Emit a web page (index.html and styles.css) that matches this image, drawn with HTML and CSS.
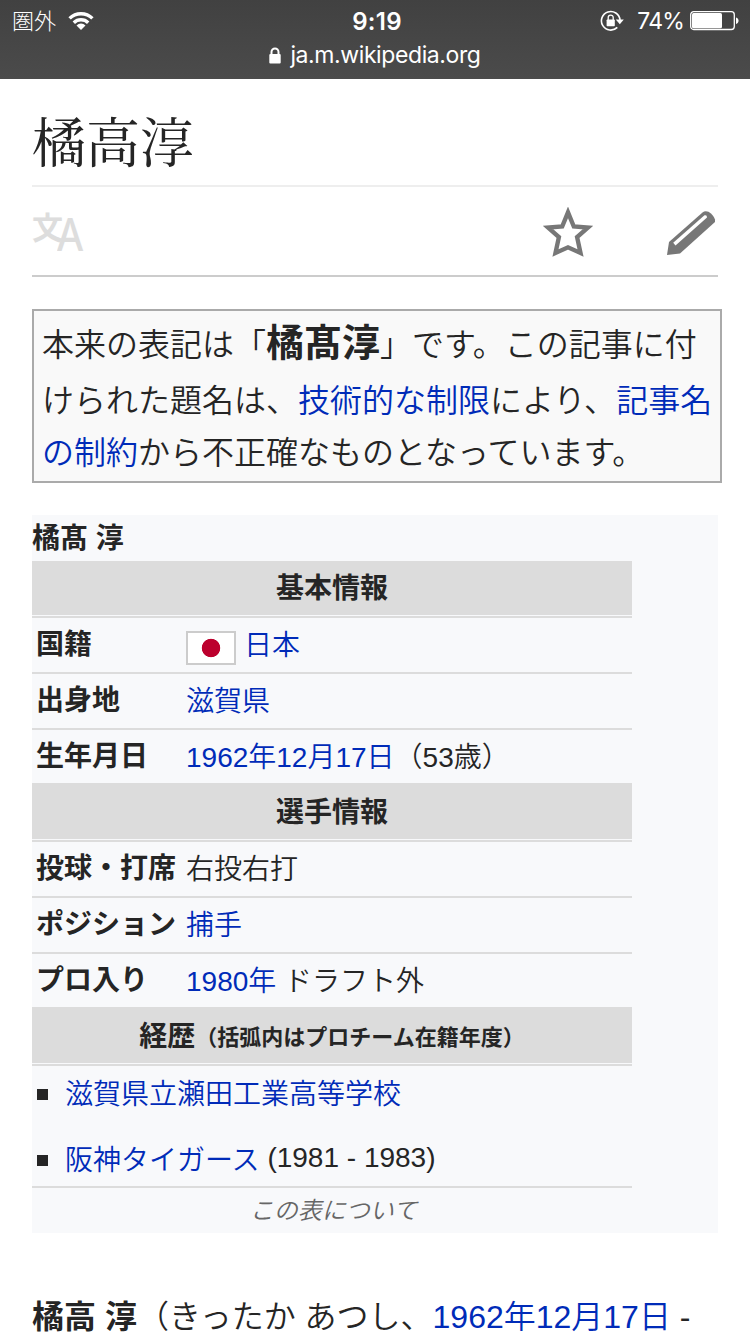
FILE: index.html
```html
<!DOCTYPE html>
<html lang="ja">
<head>
    <meta charset="UTF-8">
    <meta name="viewport" content="width=device-width, initial-scale=1.0">
    <title>橘高淳 - Wikipedia</title>
    <link rel="stylesheet" href="styles.css">
</head>
<body>
    <header class="browser-bar">
        <div class="status">
            <div class="status-left">
                <span class="carrier">圏外</span>
                <svg class="wifi" width="26" height="20" viewBox="0 0 26 20">
                    <g fill="none" stroke="#fff" stroke-width="3.4">
                        <path d="M1.6 7.4a16.2 16.2 0 0 1 22.8 0"/>
                        <path d="M5.8 11.8a10.2 10.2 0 0 1 14.4 0"/>
                    </g>
                    <path d="M13 19l-4.5-4.6a6.4 6.4 0 0 1 9 0z" fill="#fff"/>
                </svg>
            </div>
            <span class="clock">9:19</span>
            <div class="status-right">
                <svg class="rotation" width="24" height="22" viewBox="0 0 24 22">
                    <path d="M20 10a9.300 9.300 0 1 0-2.700 7.400" fill="none" stroke="#fff" stroke-width="1.6"/>
                    <path d="M15.8 9.6h8l-4 4.6z" fill="#fff"/>
                    <rect x="6.6" y="9.4" width="8.2" height="6.8" rx=".8" fill="#fff"/>
                    <path d="M8.2 10V7.6a2.5 2.5 0 0 1 5 0V10" fill="none" stroke="#fff" stroke-width="1.3"/>
                </svg>
                <span class="percent">74%</span>
                <svg class="battery" width="49" height="20" viewBox="0 0 49 20">
                    <rect x=".7" y=".7" width="43.6" height="17.8" rx="3" fill="none" stroke="#fff" stroke-width="1.3"/>
                    <rect x="2" y="2" width="30" height="15.2" rx="1.5" fill="#fff"/>
                    <path d="M46 6.4c3.4.6 3.4 6 0 6.6z" fill="#fff"/>
                </svg>
            </div>
        </div>
        <div class="address">
            <svg class="lock" width="12" height="17" viewBox="0 0 12 17">
                <rect x=".3" y="7" width="11.4" height="9.4" rx="1" fill="#fff"/>
                <path d="M2.5 8V4.900a3.500 3.500 0 0 1 7 0v3" fill="none" stroke="#fff" stroke-width="2"/>
            </svg>
            <span>ja.m.wikipedia.org</span>
        </div>
    </header>

    <main>
        <h1>橘高淳</h1>
        <nav class="page-actions">
            <span class="language"><span class="han">文</span><span class="latin">A</span></span>
            <svg class="star" width="50" height="52" viewBox="0 0 50 52">
                <path d="M25 5.3l5.8 14.2 14.1 1.1-10.8 9.5 3.4 15.8L25 40.3l-12.5 5.6 3.4-15.8L5.1 20.6l14.1-1.1z" fill="none" stroke="#777" stroke-width="4.4"/>
            </svg>
            <svg class="pencil" width="50" height="46" viewBox="0 0 50 46">
                <path d="M1 45l2-13L36.500 2.500Q39 .3 42.500 1.800Q47 4.300 49 9.500V12L14 43.500z" fill="#777"/>
                <path d="M7.200 32.800L38.500 5.300Q41 4.500 41 7.500L9.500 35.500z" fill="#fff"/>
            </svg>
        </nav>

        <div class="notice">
            <p class="first">本来の表記は「<b>橘髙淳</b>」です。この記事に付</p>
            <p>けられた題名は、<a>技術的な制限</a>により、<a>記事名</a></p>
            <p><a>の制約</a>から不正確なものとなっています。</p>
        </div>

        <section class="infobox">
            <div class="name">橘髙 淳</div>
            <div class="heading">基本情報</div>
            <div class="row">
                <div class="label">国籍</div>
                <div class="value flagged"><span class="flag"></span><a>日本</a></div>
            </div>
            <div class="row">
                <div class="label">出身地</div>
                <div class="value"><a>滋賀県</a></div>
            </div>
            <div class="row last">
                <div class="label">生年月日</div>
                <div class="value"><a>1962年12月17日</a>（53歳）</div>
            </div>
            <div class="heading tall">選手情報</div>
            <div class="row">
                <div class="label">投球・打席</div>
                <div class="value">右投右打</div>
            </div>
            <div class="row">
                <div class="label">ポジション</div>
                <div class="value"><a>捕手</a></div>
            </div>
            <div class="row last">
                <div class="label">プロ入り</div>
                <div class="value"><a>1980年</a> ドラフト外</div>
            </div>
            <div class="heading tall">経歴<small>（括弧内はプロチーム在籍年度）</small></div>
            <ul class="career">
                <li><a>滋賀県立瀬田工業高等学校</a></li>
                <li><a>阪神タイガース</a> (1981 - 1983)</li>
            </ul>
            <div class="about">この表について</div>
        </section>

        <p class="intro"><b>橘高 淳</b>（きったか あつし、<a>1962年12月17日</a> -</p>
    </main>
</body>
</html>
```
FILE: styles.css
```css
/* General */
* {
    box-sizing: border-box;
}

body {
    margin: 0;
    height: 1334px;
    overflow: hidden;
    background: #fff;
    color: #252525;
    font-family: "Liberation Sans", "Noto Sans CJK JP", sans-serif;
    font-weight: 350;
    text-spacing-trim: space-all;
}

p, h1, ul {
    margin: 0;
    padding: 0;
}

a {
    color: #002bb8;
}

b {
    font-weight: 700;
}

/* Browser bar */
.browser-bar {
    height: 79px;
    background: linear-gradient(#414141, #4b4b4b);
    color: #fff;
    font-family: Inter, "Noto Sans CJK JP", sans-serif;
}

.status {
    display: grid;
    grid-template-columns: 1fr auto 1fr;
    align-items: center;
    height: 40px;
    padding: 0 11px 0 12px;
}

.status-left, .status-right {
    display: flex;
    align-items: center;
}

.status-right {
    justify-content: flex-end;
}

.carrier {
    margin-right: 12px;
    font-size: 22px;
    line-height: 42px;
    font-weight: 300;
}

.clock {
    padding-left: 3px;
    font-size: 24px;
    font-weight: 600;
    letter-spacing: 0.3px;
}

.percent {
    margin: 0 6px 0 13px;
    font-size: 23px;
    font-weight: 400;
    letter-spacing: -0.8px;
}

.address {
    display: flex;
    justify-content: center;
    align-items: center;
    gap: 9px;
    height: 30px;
    font-size: 23px;
    font-weight: 400;
    letter-spacing: -0.4px;
}

/* Title and actions */
main {
    padding: 0 32px;
}

h1 {
    height: 108px;
    padding-top: 22px;
    border-bottom: 2px solid #eee;
    font-family: "Noto Serif CJK JP", "Noto Sans CJK JP", serif;
    font-size: 54px;
    font-weight: 400;
    line-height: 78px;
}

.page-actions {
    display: flex;
    align-items: center;
    height: 90px;
    padding-top: 3px;
    border-bottom: 2px solid #ccc;
}

.language {
    display: flex;
    margin-right: auto;
    color: #ddd;
    line-height: 50px;
}

.han {
    margin-top: -3px;
    font-size: 31px;
    font-weight: 700;
}

.latin {
    margin: 1px 0 0 -6px;
    font-family: "Noto Sans", sans-serif;
    font-size: 46px;
    font-weight: 500;
    transform: scaleX(0.87);
    transform-origin: left;
}

.star {
    margin-right: 73px;
}

.pencil {
    margin-right: 2px;
}

/* Notice */
.notice {
    width: 690px;
    height: 174px;
    margin-top: 32px;
    padding: 8px 0 0 8px;
    background: #f9f9f9;
    border: 2px solid #aaa;
    font-size: 32px;
    line-height: 52px;
    white-space: nowrap;
}

.notice .first {
    height: 56px;
}

.notice b {
    font-size: 38px;
    line-height: 48px;
}

/* Infobox */
.infobox {
    height: 718px;
    margin-top: 32px;
    padding-right: 86px;
    background: #f8f9fb;
    font-size: 28px;
}

.name {
    height: 46px;
    font-weight: 700;
    line-height: 47px;
}

.heading {
    height: 54px;
    margin-bottom: 1px;
    background: #dcdcdc;
    font-weight: 700;
    line-height: 55px;
    text-align: center;
}

.heading.tall {
    height: 56px;
    line-height: 59px;
}

.heading small {
    font-size: 22px;
    vertical-align: 1px;
}

.row {
    display: flex;
    height: 56px;
    padding-left: 4px;
    border-top: 2px solid #dcdcdc;
    line-height: 56px;
}

.row.last {
    height: 55px;
}

.label {
    width: 150px;
    line-height: 53px;
    font-weight: 700;
}

.flagged {
    display: flex;
}

.flag {
    width: 50px;
    height: 34px;
    margin: 13px 8px 0 0;
    border: 2px solid #ccc;
    background: radial-gradient(circle at 50% 50%, #bc002d 8.800px, #fff 9.600px);
}

.career {
    height: 122px;
    border-top: 2px solid #dcdcdc;
    list-style: none;
}

.career li {
    display: flex;
    align-items: center;
    height: 54px;
    margin-bottom: 12px;
    padding: 0 0 2px 5px;
    white-space: pre;
}

.career li::before {
    content: "";
    width: 11px;
    height: 11px;
    margin: 4px 17px 0 0;
    background: #252525;
}

.about {
    padding-left: 3px;
    border-top: 2px solid #dcdcdc;
    color: #666;
    font-size: 24px;
    font-style: italic;
    line-height: 45px;
    text-align: center;
}

/* Article text */
.intro {
    margin-top: 59px;
    font-size: 32px;
    line-height: 42px;
    padding-top: 4px;
    white-space: nowrap;
}
```
